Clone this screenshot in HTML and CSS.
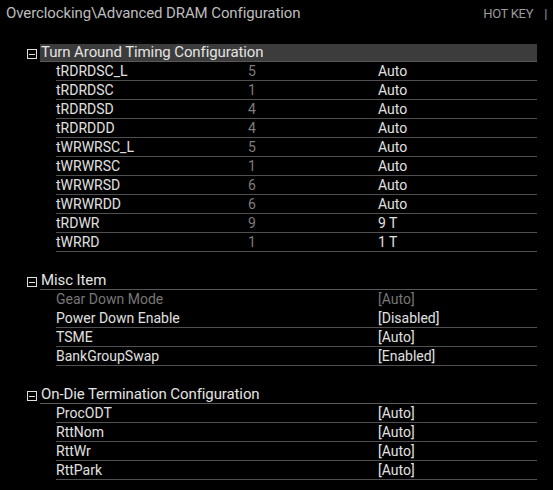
FILE: index.html
```html
<!DOCTYPE html>
<html>
<head>
<meta charset="utf-8">
<link rel="stylesheet" href="styles.css">
</head>
<body>
<div class="topbar">
  <div class="title">Overclocking\Advanced DRAM Configuration</div>
  <div class="hotkey">HOT KEY <span class="sep">|</span></div>
</div>
<div class="main">
  <div class="section">
    <div class="sec-head">
      <span class="toggle"></span>
      <div class="sec-title active">Turn Around Timing Configuration</div>
    </div>
    <div class="row"><span class="name">tRDRDSC_L</span><span class="cur">5</span><span class="val">Auto</span></div>
    <div class="row"><span class="name">tRDRDSC</span><span class="cur">1</span><span class="val">Auto</span></div>
    <div class="row"><span class="name">tRDRDSD</span><span class="cur">4</span><span class="val">Auto</span></div>
    <div class="row"><span class="name">tRDRDDD</span><span class="cur">4</span><span class="val">Auto</span></div>
    <div class="row"><span class="name">tWRWRSC_L</span><span class="cur">5</span><span class="val">Auto</span></div>
    <div class="row"><span class="name">tWRWRSC</span><span class="cur">1</span><span class="val">Auto</span></div>
    <div class="row"><span class="name">tWRWRSD</span><span class="cur">6</span><span class="val">Auto</span></div>
    <div class="row"><span class="name">tWRWRDD</span><span class="cur">6</span><span class="val">Auto</span></div>
    <div class="row"><span class="name">tRDWR</span><span class="cur">9</span><span class="val">9 T</span></div>
    <div class="row"><span class="name">tWRRD</span><span class="cur">1</span><span class="val">1 T</span></div>
  </div>
  <div class="section">
    <div class="sec-head">
      <span class="toggle"></span>
      <div class="sec-title">Misc Item</div>
    </div>
    <div class="row disabled noline"><span class="name">Gear Down Mode</span><span class="cur"></span><span class="val">[Auto]</span></div>
    <div class="row"><span class="name">Power Down Enable</span><span class="cur"></span><span class="val">[Disabled]</span></div>
    <div class="row"><span class="name">TSME</span><span class="cur"></span><span class="val">[Auto]</span></div>
    <div class="row"><span class="name">BankGroupSwap</span><span class="cur"></span><span class="val">[Enabled]</span></div>
  </div>
  <div class="section">
    <div class="sec-head">
      <span class="toggle"></span>
      <div class="sec-title">On-Die Termination Configuration</div>
    </div>
    <div class="row"><span class="name">ProcODT</span><span class="cur"></span><span class="val">[Auto]</span></div>
    <div class="row"><span class="name">RttNom</span><span class="cur"></span><span class="val">[Auto]</span></div>
    <div class="row"><span class="name">RttWr</span><span class="cur"></span><span class="val">[Auto]</span></div>
    <div class="row"><span class="name">RttPark</span><span class="cur"></span><span class="val">[Auto]</span></div>
  </div>
</div>
</body>
</html>
```
FILE: styles.css
```css
html, body {
  margin: 0;
  padding: 0;
  background: #000;
}
body {
  width: 553px;
  height: 490px;
  overflow: hidden;
  font-family: Roboto, "Liberation Sans", sans-serif;
  font-weight: 400;
  color: #e6e6e6;
}
.topbar {
  display: flex;
  justify-content: space-between;
  align-items: baseline;
  height: 43px;
  padding: 2px 6px 0 6px;
  box-sizing: border-box;
}
.title {
  font-size: 15px;
  color: #bdbdbd;
  line-height: 22px;
  letter-spacing: -0.1px;
}
.hotkey {
  font-size: 13px;
  color: #9a9a9a;
  letter-spacing: -0.3px;
}
.hotkey .sep {
  margin-left: 8px;
}
.main {
  padding-left: 27px;
  width: 510px;
}
.section + .section {
  margin-top: 19px;
}
.sec-head {
  display: flex;
  align-items: flex-end;
  height: 19px;
}
.toggle {
  width: 10px;
  height: 10px;
  border: 1px solid #e0e0e0;
  box-sizing: border-box;
  position: relative;
  margin-right: 3px;
  margin-bottom: 3px;
  flex: none;
}
.toggle::after {
  content: "";
  position: absolute;
  left: 1px;
  right: 1px;
  top: 3.5px;
  height: 1px;
  background: #e0e0e0;
}
.sec-title {
  flex: 1;
  height: 17px;
  line-height: 17px;
  font-size: 15px;
  color: #e4e4e4;
  border-bottom: 1px solid #585858;
  padding-left: 1px;
  white-space: nowrap;
  letter-spacing: -0.1px;
}
.sec-title.active {
  background: #3c3c3c;
}
.row {
  display: grid;
  grid-template-columns: 192px 130px 1fr;
  margin-left: 29px;
  height: 19px;
  padding-top: 1px;
  line-height: 17px;
  font-size: 14px;
  border-bottom: 1px solid #505050;
  box-sizing: border-box;
}
.row.noline {
  border-bottom-color: transparent;
}
.name {
  color: #e0e0e0;
}
.cur {
  color: #7c7c7c;
}
.val {
  color: #e0e0e0;
}
.row.disabled .name,
.row.disabled .val {
  color: #777;
}
```
